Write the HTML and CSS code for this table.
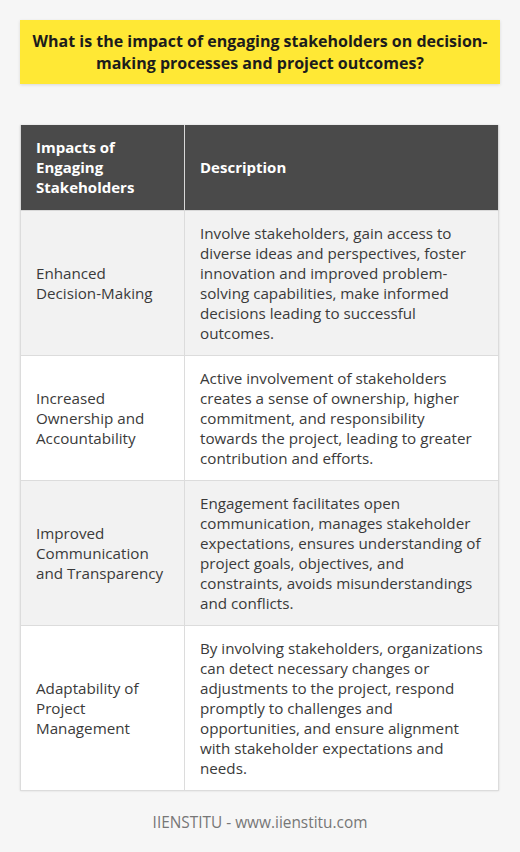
FILE: index.html
```html
<!DOCTYPE html>
<html>
<head>
<meta charset="utf-8">
<link rel="stylesheet" href="styles.css">
</head>
<body>
<div class="page">
  <h1 class="title">What is the impact of engaging stakeholders on decision-making processes and project outcomes?</h1>
  <table class="grid">
    <thead>
      <tr><th class="c1">Impacts of Engaging Stakeholders</th><th class="c2">Description</th></tr>
    </thead>
    <tbody>
      <tr class="alt"><td>Enhanced Decision-Making</td><td>Involve stakeholders, gain access to diverse ideas and perspectives, foster innovation and improved problem-solving capabilities, make informed decisions leading to successful outcomes.</td></tr>
      <tr><td>Increased Ownership and Accountability</td><td>Active involvement of stakeholders creates a sense of ownership, higher commitment, and responsibility towards the project, leading to greater contribution and efforts.</td></tr>
      <tr class="alt"><td>Improved Communication and Transparency</td><td>Engagement facilitates open communication, manages stakeholder expectations, ensures understanding of project goals, objectives, and constraints, avoids misunderstandings and conflicts.</td></tr>
      <tr><td>Adaptability of Project Management</td><td>By involving stakeholders, organizations can detect necessary changes or adjustments to the project, respond promptly to challenges and opportunities, and ensure alignment with stakeholder expectations and needs.</td></tr>
    </tbody>
  </table>
  <div class="footer">IIENSTITU - www.iienstitu.com</div>
</div>
</body>
</html>
```

FILE: styles.css
```css
html, body {
  margin: 0;
  padding: 0;
  background: #f6f6f6;
}
.page {
  width: 520px;
  padding: 20px 20px 0 20px;
  box-sizing: border-box;
  font-family: "Open Sans", sans-serif;
}
.title {
  margin: 0;
  background: #ffe835;
  color: #1c1c1c;
  font-size: 16px;
  font-weight: 700;
  line-height: 22px;
  text-align: center;
  padding: 10px 12px;
  box-shadow: 0 1px 3px rgba(0,0,0,0.12);
}
.grid {
  margin-top: 41px;
  width: 479px;
  border-collapse: collapse;
  font-size: 15.2px;
  line-height: 20px;
  color: #3a3a3a;
  box-shadow: 0 0 2px rgba(0,0,0,0.12);
}
.grid th {
  background: #4a4a4a;
  color: #ffffff;
  font-size: 15px;
  font-weight: 700;
  text-align: left;
  padding: 12px 15px 13px 15px;
  border: 1px solid #d8d8d8;
  border-top: none;
}
.grid th.c1 { width: 133px; }
.grid td {
  background: #ffffff;
  padding: 12px 14px 12px 15px;
  border: 1px solid #dcdcdc;
  vertical-align: middle;
}
.grid tr.alt td { background: #f2f2f2; }
.footer {
  margin-top: 22px;
  text-align: center;
  color: #777777;
  font-size: 15.4px;
  line-height: 20px;
}
```
